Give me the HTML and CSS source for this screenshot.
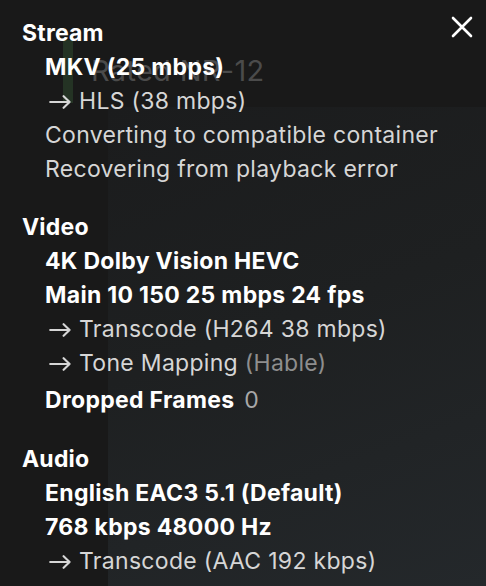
FILE: index.html
```html
<!DOCTYPE html>
<html>
<head>
<meta charset="utf-8">
<link rel="stylesheet" href="styles.css">
</head>
<body>
<div class="stage">
  <div class="video" aria-hidden="true"></div>
  <div class="rating-bar" aria-hidden="true"></div>
  <div class="rating" aria-hidden="true">Rated NR-12</div>

  <button class="close" aria-label="Close">
    <svg width="24" height="24" viewBox="0 0 24 24"><path d="M3 3 L21 21 M21 3 L3 21" stroke="#fff" stroke-width="2.6" stroke-linecap="round" fill="none"/></svg>
  </button>

  <div class="info">
    <section class="group">
      <h2 class="title">Stream</h2>
      <ul class="items">
        <li class="item strong">MKV (25 mbps)</li>
        <li class="item sub"><svg class="arrow" width="22" height="14" viewBox="0 0 22 14"><path d="M1.2 7 H20.6 M14.6 1.2 L20.6 7 L14.6 12.8" fill="none" stroke="currentColor" stroke-width="2.1" stroke-linecap="round" stroke-linejoin="round"/></svg>HLS (38 mbps)</li>
        <li class="item">Converting to compatible container</li>
        <li class="item">Recovering from playback error</li>
      </ul>
    </section>
    <section class="group">
      <h2 class="title">Video</h2>
      <ul class="items">
        <li class="item strong">4K Dolby Vision HEVC</li>
        <li class="item strong">Main 10 150 25 mbps 24 fps</li>
        <li class="item sub"><svg class="arrow" width="22" height="14" viewBox="0 0 22 14"><path d="M1.2 7 H20.6 M14.6 1.2 L20.6 7 L14.6 12.8" fill="none" stroke="currentColor" stroke-width="2.1" stroke-linecap="round" stroke-linejoin="round"/></svg>Transcode (H264 38 mbps)</li>
        <li class="item sub"><svg class="arrow" width="22" height="14" viewBox="0 0 22 14"><path d="M1.2 7 H20.6 M14.6 1.2 L20.6 7 L14.6 12.8" fill="none" stroke="currentColor" stroke-width="2.1" stroke-linecap="round" stroke-linejoin="round"/></svg>Tone Mapping <span class="dim">(Hable)</span></li>
        <li class="item strong dropped">Dropped Frames <span class="value">0</span></li>
      </ul>
    </section>
    <section class="group">
      <h2 class="title">Audio</h2>
      <ul class="items">
        <li class="item strong">English EAC3 5.1 (Default)</li>
        <li class="item strong">768 kbps 48000 Hz</li>
        <li class="item sub"><svg class="arrow" width="22" height="14" viewBox="0 0 22 14"><path d="M1.2 7 H20.6 M14.6 1.2 L20.6 7 L14.6 12.8" fill="none" stroke="currentColor" stroke-width="2.1" stroke-linecap="round" stroke-linejoin="round"/></svg>Transcode (AAC 192 kbps)</li>
      </ul>
    </section>
  </div>
</div>
</body>
</html>
```
FILE: styles.css
```css
html, body {
  margin: 0;
  padding: 0;
  background: #191919;
}
body {
  width: 486px;
  height: 586px;
  overflow: hidden;
  font-family: Inter, "Noto Sans", sans-serif;
  -webkit-font-smoothing: antialiased;
}
.stage {
  position: relative;
  width: 486px;
  height: 586px;
  overflow: hidden;
}
.video {
  position: absolute;
  left: 108px;
  top: 107px;
  right: 0;
  bottom: 0;
  background: linear-gradient(160deg, #1b1c1d 0%, #1e2021 45%, #24282b 100%);
}
.rating-bar {
  position: absolute;
  left: 63px;
  top: 40px;
  width: 10px;
  height: 63px;
  background: #243324;
}
.rating {
  position: absolute;
  left: 91px;
  top: 51px;
  font-size: 29px;
  line-height: 40px;
  color: #4b4b4b;
  letter-spacing: 0.3px;
}
.close {
  position: absolute;
  left: 450px;
  top: 15px;
  width: 24px;
  height: 24px;
  padding: 0;
  border: 0;
  background: none;
}
.close svg { display: block; }
.info {
  position: relative;
  padding: 15.5px 0 0 22px;
  display: flex;
  flex-direction: column;
  gap: 24.5px;
}
.title {
  margin: 0;
  font-size: 23px;
  line-height: 34px;
  font-weight: 700;
  letter-spacing: 0.2px;
  color: #fff;
}
.items {
  list-style: none;
  margin: 0;
  padding: 0 0 0 23px;
}
.item {
  font-size: 23px;
  line-height: 34px;
  letter-spacing: 0.3px;
  color: #d6d6d6;
  white-space: nowrap;
}
.item.strong {
  color: #fff;
  font-weight: 700;
}
.item.sub {
  padding-left: 4px;
}
.arrow {
  display: inline-block;
  vertical-align: 0;
  margin-right: 8px;
}
.dim {
  color: #8e8e8e;
}
.dropped {
  margin-top: 3px;
}
.value {
  font-weight: 400;
  color: #a8a8a8;
  margin-left: 4px;
}
```
